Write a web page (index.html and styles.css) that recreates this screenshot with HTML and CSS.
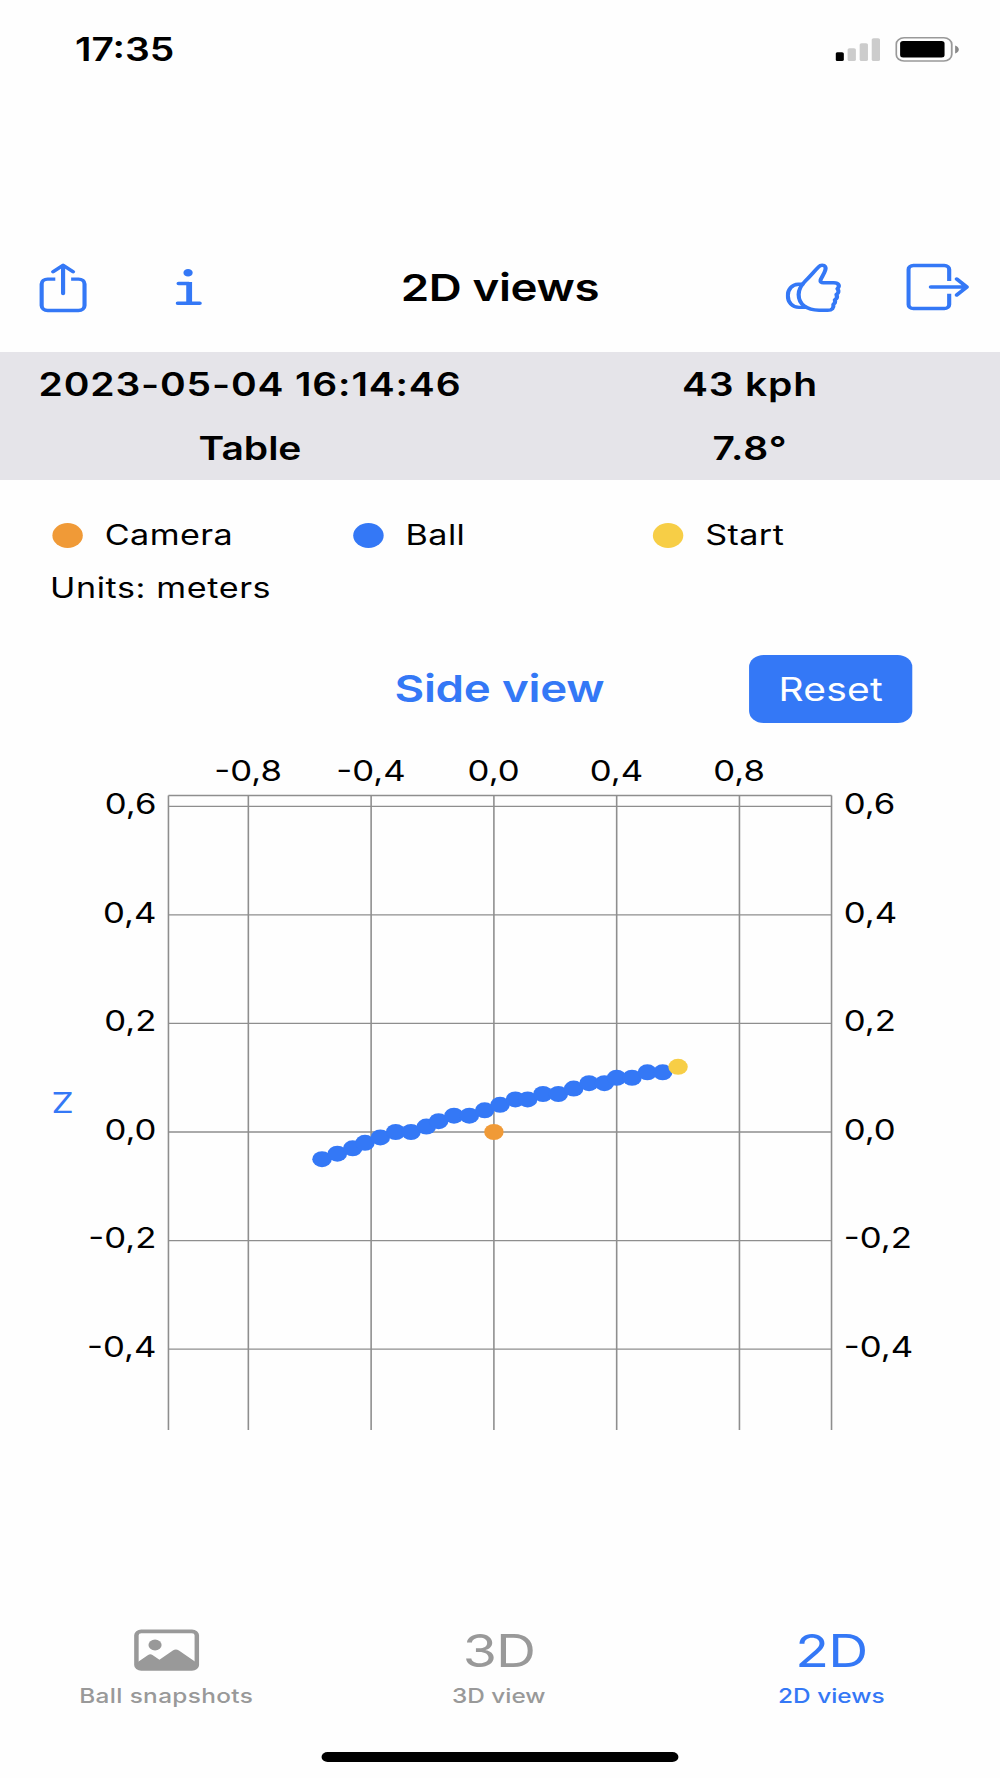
FILE: index.html
```html
<!DOCTYPE html>
<html lang="en">
<head>
    <meta charset="UTF-8">
    <meta name="viewport" content="width=device-width, initial-scale=1.0">
    <title>2D views</title>
    <link rel="stylesheet" href="styles.css">
</head>
<body>
    <div class="screen">
        <div class="status-bar">
            <span class="time">17:35</span>
            <div class="status-icons">
                <svg width="37" height="23" viewBox="0 0 37 23">
                    <rect x="0" y="14.2" width="6.8" height="8.8" rx="1.5" fill="#000"/>
                    <rect x="9.9" y="10.2" width="6.8" height="12.8" rx="1.5" fill="#ccc"/>
                    <rect x="19.8" y="5.2" width="6.8" height="17.8" rx="1.5" fill="#ccc"/>
                    <rect x="29.7" y="0.2" width="6.8" height="22.8" rx="1.5" fill="#ccc"/>
                </svg>
                <svg width="53" height="25" viewBox="0 0 53 25">
                    <rect x="0.8" y="0.8" width="45.6" height="23.2" rx="6.5" fill="none" stroke="#999" stroke-width="1.5"/>
                    <rect x="4" y="4" width="36.5" height="16.6" rx="2.5" fill="#000"/>
                    <path d="M49.2 8.4c4 1.8 4 6.2 0 8z" fill="#888"/>
                </svg>
            </div>
        </div>

        <div class="nav-bar">
            <div class="nav-left">
                <svg class="icon" width="40" height="51" viewBox="0 0 40 51">
                    <path stroke-linecap="butt" d="M13.4 16.1H7.2a5 5 0 0 0-5 5V42.500a5 5 0 0 0 5 5h25.200a5 5 0 0 0 5-5V21.100a5 5 0 0 0-5-5h-6"/>
                    <path d="M19.800 30.500V2.600M11.600 8.800l8.200-6.600 8.200 6.600"/>
                </svg>
                <svg class="icon" width="22" height="39" viewBox="0 0 22 39">
                    <circle cx="10.4" cy="3.8" r="3.8" class="solid"/>
                    <path d="M2.6 14.500H11M1.900 34.300H20"/>
                    <path d="M11.3 15.300V33.500" stroke-width="4.800" stroke-linecap="square"/>
                </svg>
            </div>
            <h1>2D views</h1>
            <div class="nav-right">
                <svg class="icon" width="46" height="50" viewBox="0 0 46 50">
                    <path d="M27 4C28 2.700 29 2.200 30 2.200c2.400 0 3.300 2 2.600 4.800C31.800 11 29 15 28.700 17c-.3 2 .6 2.800 2.300 2.800h8.500c4.300 0 5.300 3.200 3 6 1.500 2 1 4.500-.8 5.700.9 2 .4 4.200-1.300 5.400.6 2.200 0 3.600-1.200 4.400.5 3.800-1 5.900-4.700 5.900H27.500C17.500 47.200 10.700 41.500 10.700 31.500c0-6 2-9.300 5.500-13.500C20.500 12.800 23.200 8.700 27 4z"/>
                    <path d="M14 21.200H10.500C5 21.500 1.800 26.500 1.800 32.800c0 6.400 3.700 11.600 9.200 11.600h6"/>
                </svg>
                <svg class="icon" width="52" height="50" viewBox="0 0 52 50">
                    <path stroke-linecap="butt" d="M35.300 18V6.500a4 4 0 0 0-4-4H5.900a4 4 0 0 0-4 4v35a4 4 0 0 0 4 4h25.400a4 4 0 0 0 4-4V30.700"/>
                    <path d="M20.200 24H49.600M41.500 16L49.800 24l-8.300 8"/>
                </svg>
            </div>
        </div>

        <div class="info">
            <span class="value">2023-05-04 16:14:46</span>
            <span class="value">43 kph</span>
            <span>Table</span>
            <span class="value">7.8°</span>
        </div>

        <div class="legend">
            <div class="legend-item"><i class="dot camera"></i>Camera</div>
            <div class="legend-item"><i class="dot ball"></i>Ball</div>
            <div class="legend-item"><i class="dot start"></i>Start</div>
        </div>
        <p class="units">Units: meters</p>

        <div class="chart-header">
            <h2>Side view</h2>
            <button class="reset">Reset</button>
        </div>

        <svg id="chart" class="chart" width="821" height="700" viewBox="0 0 821 700">
            <text x="42.3" y="373" class="axis-name">Z</text>
        </svg>

        <div class="tab-bar">
            <div class="tab">
                <div class="tab-icon">
                    <svg width="54" height="43" viewBox="0 0 54 43">
                        <rect x="2" y="2.3" width="49.6" height="37.6" rx="4" fill="none" stroke="currentColor" stroke-width="3.7"/>
                        <circle cx="17.3" cy="16" r="5.4" fill="currentColor"/>
                        <path d="M2.600 33.500l9-7.500q1.800-1.400 3.600 0l5.700 4.700 11-9.200q2.500-2 5 0L50.600 33V40H2.600z" fill="currentColor"/>
                    </svg>
                </div>
                <span class="wide">Ball snapshots</span>
            </div>
            <div class="tab">
                <div class="tab-icon">3D</div>
                <span>3D view</span>
            </div>
            <div class="tab active">
                <div class="tab-icon">2D</div>
                <span>2D views</span>
            </div>
        </div>
        <div class="home-indicator"></div>
    </div>

    <script src="chart.js"></script>
</body>
</html>
```
FILE: styles.css
```css
* {
    box-sizing: border-box;
}
body {
    margin: 0;
    background-color: #fefefe;
    font-family: Inter, "Liberation Sans", sans-serif;
    color: #000;
    overflow: hidden;
}
.screen {
    width: 821px;
    height: 1778px;
    display: flex;
    flex-direction: column;
    transform: scaleX(1.218);
    transform-origin: 0 0;
}
.status-bar {
    height: 98px;
    padding: 0 33px 0 61.5px;
    display: flex;
    align-items: center;
    justify-content: space-between;
}
.time {
    font-size: 32px;
    font-weight: 600;
}
.status-icons {
    display: flex;
    align-items: center;
    gap: 12px;
}
.nav-bar {
    height: 60px;
    margin-top: 160px;
    display: grid;
    grid-template-columns: 1fr auto 1fr;
    align-items: center;
}
.nav-left,
.nav-right {
    display: flex;
    align-items: center;
}
.nav-left {
    padding-left: 32px;
    gap: 72px;
}
.nav-right {
    justify-content: flex-end;
    padding-right: 25px;
    gap: 53.5px;
}
.icon {
    fill: none;
    stroke: #3478f6;
    stroke-width: 3.4;
    stroke-linecap: round;
    stroke-linejoin: round;
}
.icon .solid {
    fill: #3478f6;
    stroke: none;
}
h1 {
    margin: 0 0 1px;
    font-size: 37.5px;
    font-weight: 600;
    letter-spacing: -0.3px;
}
.info {
    height: 128px;
    margin-top: 34px;
    display: grid;
    grid-template-columns: 1fr 1fr;
    grid-template-rows: 64px 64px;
    align-items: center;
    justify-items: center;
    background-color: #e5e4e9;
    font-size: 32px;
    font-weight: 600;
}
.value {
    letter-spacing: 0.7px;
}
.legend {
    height: 50px;
    margin-top: 30px;
    padding-left: 43px;
    display: grid;
    grid-template-columns: 247px 246px 1fr;
    align-items: center;
    font-size: 28px;
    letter-spacing: 0.35px;
}
.legend-item {
    display: flex;
    align-items: center;
    gap: 18px;
}
.dot {
    width: 25px;
    height: 25px;
    border-radius: 50%;
}
.camera {
    background-color: #f09a37;
}
.ball {
    background-color: #3478f6;
}
.start {
    background-color: #f7ce46;
}
.units {
    margin: 10px 0 0 41px;
    font-size: 28px;
    line-height: 36px;
    letter-spacing: 0.5px;
}
.chart-header {
    height: 68px;
    margin-top: 49px;
    padding-right: 72px;
    display: grid;
    grid-template-columns: 1fr 134px;
    align-items: center;
}
h2 {
    margin: 0 0 1px 205px;
    text-align: center;
    font-size: 37.5px;
    font-weight: 600;
    letter-spacing: -0.2px;
    color: #3478f6;
}
.reset {
    height: 68px;
    border: none;
    border-radius: 12px;
    background-color: #3478f6;
    color: #fff;
    font-family: inherit;
    font-size: 32px;
    letter-spacing: 0.2px;
}
.chart {
    margin-top: 17px;
    font-size: 28.5px;
}
.grid {
    stroke: #8e8e8e;
    stroke-width: 1.3;
}
.axis-name {
    fill: #3478f6;
    font-size: 29px;
    font-weight: 400;
}
.tab-bar {
    margin: 178px 2px 0 0;
    display: grid;
    grid-template-columns: repeat(3, 1fr);
    color: #999;
}
.tab {
    display: flex;
    flex-direction: column;
    align-items: center;
    font-size: 20px;
    font-weight: 500;
}
.wide {
    letter-spacing: 0.3px;
}
.tab.active {
    color: #3478f6;
}
.tab-icon {
    height: 64px;
    margin-bottom: 2px;
    display: flex;
    align-items: center;
    font-size: 45.5px;
    font-weight: 400;
    letter-spacing: -0.8px;
}
.home-indicator {
    width: 293px;
    height: 10px;
    margin: auto auto 16px 264px;
    border-radius: 5px;
    background-color: #000;
}
```
FILE: chart.js
```javascript
const chart = document.getElementById('chart');

const plot = { left: 138.3, right: 682.7, top: 55.5, bottom: 690 };
const originX = 405.5;
const originY = 392;
const scaleX = 252;
const scaleY = 542.8;

const ball = [
    [-0.56, -0.05], [-0.51, -0.04], [-0.46, -0.03], [-0.42, -0.02], [-0.37, -0.01],
    [-0.32, 0], [-0.27, 0], [-0.22, 0.01], [-0.18, 0.02], [-0.13, 0.03], [-0.08, 0.03],
    [-0.03, 0.04], [0.02, 0.05], [0.07, 0.06], [0.11, 0.06], [0.16, 0.07], [0.21, 0.07],
    [0.26, 0.08], [0.31, 0.09], [0.36, 0.09], [0.4, 0.1], [0.45, 0.1], [0.5, 0.11], [0.55, 0.11]
];

function add(name, attrs, text) {
    const el = document.createElementNS('http://www.w3.org/2000/svg', name);
    for (const key in attrs) el.setAttribute(key, attrs[key]);
    if (text) el.textContent = text;
    chart.appendChild(el);
}

function line(x1, y1, x2, y2) {
    add('line', { x1, y1, x2, y2, class: 'grid' });
}

function label(value, x, y, anchor) {
    add('text', { x, y, 'text-anchor': anchor }, value.toFixed(1).replace('.', ','));
}

function dot(x, z, color) {
    add('circle', { cx: originX + x * scaleX, cy: originY - z * scaleY, r: 8, fill: color });
}

// Frame, open at the bottom
line(plot.left, plot.top, plot.right, plot.top);
line(plot.left, plot.top, plot.left, plot.bottom);
line(plot.right, plot.top, plot.right, plot.bottom);

[-0.8, -0.4, 0, 0.4, 0.8].forEach((v) => {
    const x = originX + v * scaleX;
    line(x, plot.top, x, plot.bottom);
    label(v, x - 0.2, 41, 'middle');
});

[0.6, 0.4, 0.2, 0, -0.2, -0.4].forEach((v) => {
    const y = originY - v * scaleY;
    line(plot.left, y, plot.right, y);
    label(v, plot.left - 9.8, y + 7.8, 'end');
    label(v, plot.right + 10, y + 7.8, 'start');
});

ball.forEach(([x, z]) => dot(x, z, '#3478f6'));
dot(0.6, 0.12, '#f7ce46');
dot(0, 0, '#f09a37');
```
